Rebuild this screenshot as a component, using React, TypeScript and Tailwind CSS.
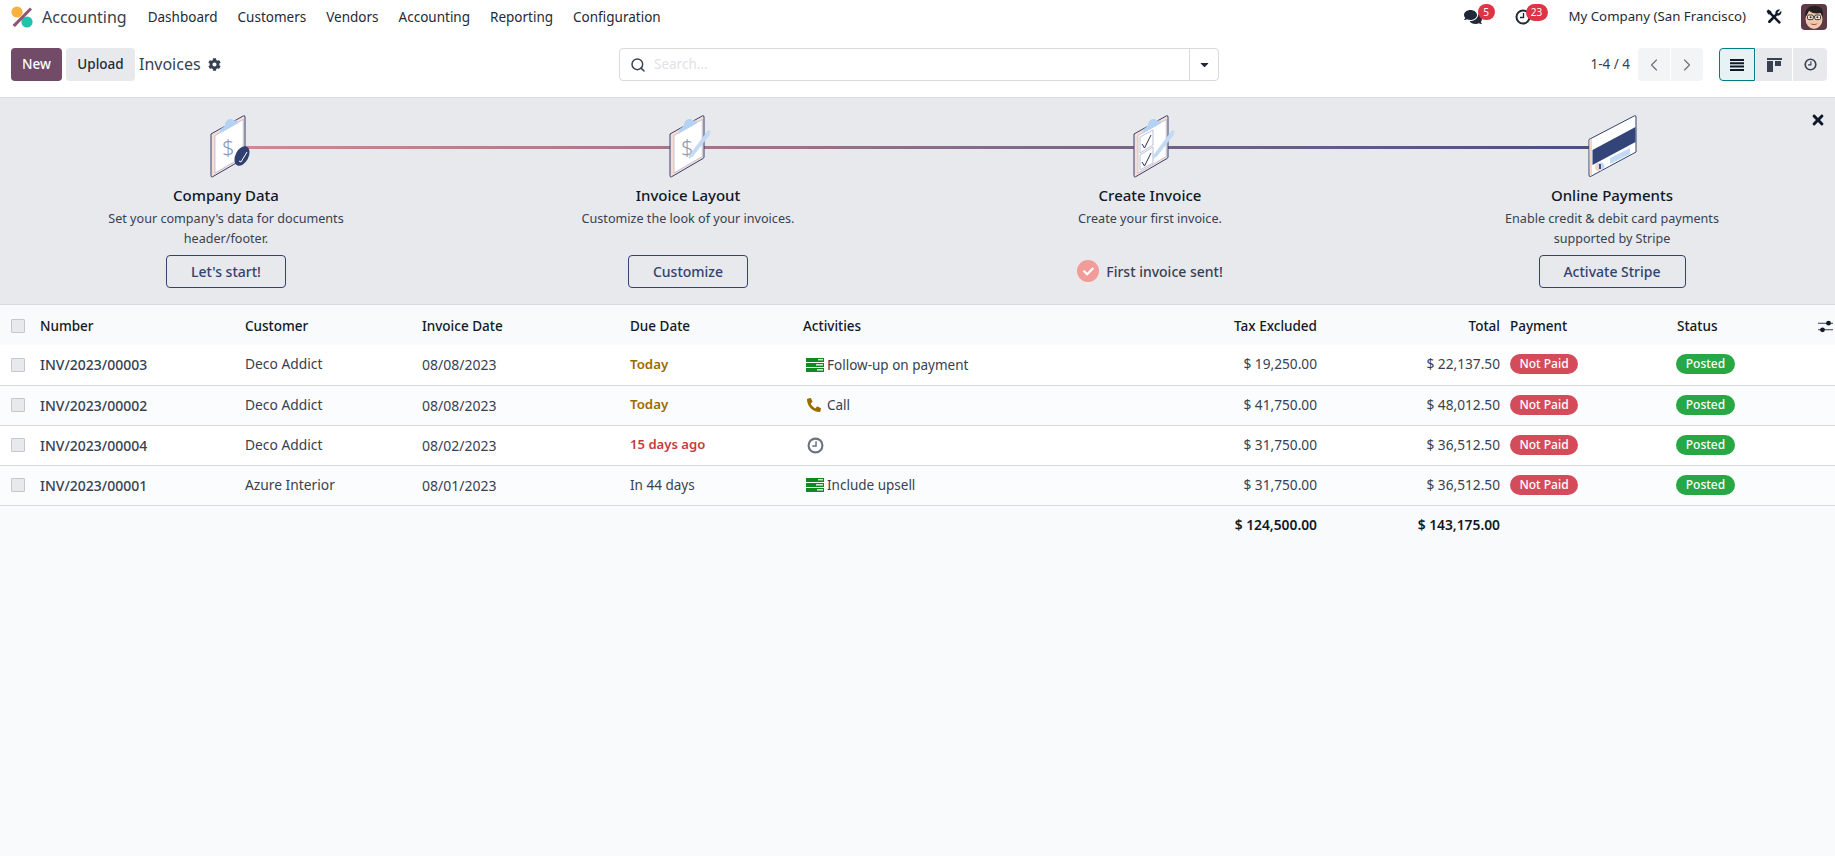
import React from "react";
import { FaComments, FaCog, FaCaretDown, FaTimes, FaPhone, FaCheck } from "react-icons/fa";
import { ChevronLeft, ChevronRight, Search } from "lucide-react";

const Clock = ({ s = 16, c = "#374151" }: { s?: number; c?: string }) => (
  <svg width={s} height={s} viewBox="0 0 16 16" fill="none">
    <circle cx="8" cy="8" r="6.5" stroke={c} strokeWidth="2" />
    <path d="M8.5 4v4.5H5" stroke={c} strokeWidth="1.4" />
  </svg>
);

const Logo = () => (
  <svg width="22" height="22" viewBox="0 0 22 22">
    <circle cx="6" cy="6" r="5.6" fill="#f9b13d" />
    <circle cx="16" cy="16" r="5.6" fill="#1fc4ab" />
    <path d="M19 1.5 L21 3.5 L4 21 L1.5 19 Z" fill="#8f5574" />
  </svg>
);

const Avatar = () => (
  <svg width="26" height="26" viewBox="0 0 26 26" className="rounded-[4px]">
    <rect width="26" height="26" fill="#5e3a48" />
    <ellipse cx="13" cy="15" rx="8.5" ry="10" fill="#f0c8ac" />
    <path d="M4.5 13 C3 4 10 1 15 2 C21 2 23 7 21.5 13 L19.5 9 C15 10 10 9 8 6.5 C7 9 6 11 4.5 13 Z" fill="#23201f" />
    <rect x="6.5" y="11" width="5.8" height="4.6" rx="1.4" fill="#f8e8dc" stroke="#2b2b2b" strokeWidth="0.9" />
    <rect x="13.7" y="11" width="5.8" height="4.6" rx="1.4" fill="#f8e8dc" stroke="#2b2b2b" strokeWidth="0.9" />
    <path d="M12.3 12.5h1.4" stroke="#2b2b2b" strokeWidth="0.9" />
    <circle cx="9.6" cy="13.3" r="1" fill="#2b2b2b" />
    <circle cx="16.4" cy="13.3" r="1" fill="#2b2b2b" />
    <path d="M9 19.5 Q13 22.5 17 19.5 Q13 20.4 9 19.5 Z" fill="#a34a48" />
  </svg>
);

const Tools = () => (
  <svg width="16" height="16" viewBox="0 0 16 16" className="ml-[20px]">
    <path d="M0.6 2.2 L2.2 0.6 L5.2 2.2 L5.6 3.8 L15 13.2 L13.2 15 L3.8 5.6 L2.2 5.2 Z" fill="#111827" />
    <path d="M2.6 11.4 L9.4 4.8 C8.8 2.2 11.4 -0.2 14.2 0.8 L11.4 3.4 L12.6 4.6 L15.2 1.8 C16.2 4.6 13.8 7.2 11.2 6.6 L4.6 13.4 C3 15 1 13 2.6 11.4 Z" fill="#111827" />
  </svg>
);

const Sliders = () => (
  <svg width="15" height="13" viewBox="0 0 15 13" className="ml-[3px]">
    <path d="M0 3.2h15M0 9.8h15" stroke="#374151" strokeWidth="1.1" />
    <circle cx="10.5" cy="3.2" r="2.4" fill="#111827" />
    <circle cx="4.5" cy="9.8" r="2.4" fill="#111827" />
  </svg>
);

const Board = ({ children }: { children?: React.ReactNode }) => (
  <>
    <path d="M1 19 L33.5 0.8 Q35 0.2 35 2 L35 42 Q35 43 34 43.5 L2.5 61.8 Q1 62.4 1 60.5 Z" fill="#f8ddd5" stroke="#34426f" strokeWidth="1" strokeLinejoin="round" />
    <path d="M5 20.5 L33.2 4.5 L33.2 41.6 L5 58 Z" fill="#ffffff" stroke="#a9b2cb" strokeWidth="0.7" />
    <path d="M10 18.5 C9.5 13.5 13.5 12.5 15 10 C15.5 4.5 21 2.5 23.5 5.5 L27.5 5.5 L27.5 8.5 Z" fill="#b5d2f3" />
    {children}
  </>
);

const Dollar = () => (
  <text x="12" y="40" fontSize="22" fill="#8d97b3" fontFamily="Noto Sans, sans-serif" fontWeight="300">$</text>
);

const Pen = () => <path d="M20 41 L38 17 Q41 14 41 17.5 Q41 20 38 23 L24 41 L20 43.5 Z" fill="#c3daf5" stroke="#bcd2ee" strokeWidth="0.5" />;

const IconCompany = () => (
  <svg width="46" height="64" viewBox="0 0 46 64" className="translate-x-[1px]">
    <Board><Dollar /></Board>
    <ellipse cx="32" cy="41" rx="6.5" ry="10.5" transform="rotate(28 32 41)" fill="#2f3f70" />
    <path d="M29 46 L31 47 L37 37" stroke="#fff" strokeWidth="1" fill="none" />
  </svg>
);

const IconLayout = () => (
  <svg width="46" height="64" viewBox="0 0 46 64" className="-translate-x-[2px]">
    <Board><Dollar /></Board>
    <Pen />
  </svg>
);

const IconCreate = () => (
  <svg width="46" height="64" viewBox="0 0 46 64">
    <Board>
      <path d="M7 22 L20 15 L20 30 L7 38 Z M7 40 L20 32 L20 48 L7 55 Z" fill="#fff" stroke="#a9b2cb" strokeWidth="0.8" />
      <path d="M9 29 L11.5 33 L18 20 M9 47 L11.5 51 L18 38" stroke="#27315a" strokeWidth="1" fill="none" />
    </Board>
    <Pen />
  </svg>
);

const IconCard = () => (
  <svg width="50" height="64" viewBox="0 0 50 64" className="-translate-x-[5px]">
    <path d="M1 24.5 L46.5 0.8 Q48 0.2 48 2 L48 37 L2.5 61.5 Q1 62 1 60 Z" fill="#ffffff" stroke="#34426f" strokeWidth="1" strokeLinejoin="round" />
    <path d="M1.5 25 L4 24 L4 59.8 L2 61 Z" fill="#f7d4c8" />
    <path d="M4.5 35 L47.5 12 L47.5 27 L4.5 50 Z" fill="#324478" />
    <path d="M22 43 L42 33 L42 39 L22 49 Z" fill="#c3daf5" />
    <circle cx="11" cy="52" r="4" fill="#f7d4c8" />
    <circle cx="13" cy="51" r="3.5" fill="#c3daf5" />
    <path d="M12 49 V54" stroke="#27315a" strokeWidth="1.6" />
  </svg>
);

const Outline = ({ children, w }: { children: React.ReactNode; w: string }) => (
  <button className={`${w} h-[33px] rounded-[4px] border border-[#34426f] text-[#34426f] text-[14px] font-medium`}>{children}</button>
);

const Step = ({ icon, title, lines, action }: { icon: React.ReactNode; title: string; lines: string[]; action: React.ReactNode }) => (
  <div className="flex flex-col items-center">
    <div className="relative z-10 h-[64px] mt-[17px] flex justify-center translate-x-[6px]">{icon}</div>
    <div className="mt-[4px] text-[15px] font-medium text-[#111827] leading-[24px]">{title}</div>
    <div className="mt-[2px] h-[40px] text-center text-[12.6px] leading-[20px] text-[#374151]">
      {lines.map((l) => <div key={l}>{l}</div>)}
    </div>
    <div className="mt-[6px] h-[33px] flex items-center">{action}</div>
  </div>
);

const Tasks = () => (
  <svg width="18" height="14" viewBox="0 0 18 14" className="shrink-0">
    <rect width="18" height="4" y="0" fill="#0f8a1f" />
    <rect width="18" height="4" y="5" fill="#0f8a1f" />
    <rect width="18" height="4" y="10" fill="#0f8a1f" />
    <rect x="12" y="1" width="5" height="1.4" fill="#cfe8d0" />
    <rect x="10" y="6" width="7" height="1.6" fill="#cfe8d0" />
    <rect x="11" y="11" width="6" height="1.6" fill="#cfe8d0" />
  </svg>
);

const Box = () => <span className="block w-[14px] h-[14px] rounded-[1px] border border-[#c4c7cc] bg-[#e7e9ed] ml-[11px]" />;

type Row = { n: string; c: string; d: string; due: string; dueCls: string; act: React.ReactNode; tax: string; tot: string };
const rows: Row[] = [
  { n: "INV/2023/00003", c: "Deco Addict", d: "08/08/2023", due: "Today", dueCls: "text-[13.3px] font-semibold text-[#9a6b01]", act: <><Tasks /><span className="ml-[3px]">Follow-up on payment</span></>, tax: "$ 19,250.00", tot: "$ 22,137.50" },
  { n: "INV/2023/00002", c: "Deco Addict", d: "08/08/2023", due: "Today", dueCls: "text-[13.3px] font-semibold text-[#9a6b01]", act: <><span className="w-[18px] pl-[1px] shrink-0"><FaPhone size={14} color="#9a6b01" className="-scale-x-100" /></span><span className="ml-[3px]">Call</span></>, tax: "$ 41,750.00", tot: "$ 48,012.50" },
  { n: "INV/2023/00004", c: "Deco Addict", d: "08/02/2023", due: "15 days ago", dueCls: "text-[13.1px] font-semibold text-[#c43c3c]", act: <span className="pl-[1px]"><Clock s={17} c="#6b7280" /></span>, tax: "$ 31,750.00", tot: "$ 36,512.50" },
  { n: "INV/2023/00001", c: "Azure Interior", d: "08/01/2023", due: "In 44 days", dueCls: "text-[13.5px]", act: <><Tasks /><span className="ml-[3px]">Include upsell</span></>, tax: "$ 31,750.00", tot: "$ 36,512.50" },
];

const navItems = ["Dashboard", "Customers", "Vendors", "Accounting", "Reporting", "Configuration"];

export default function App() {
  return (
    <div className="w-[1835px] h-[856px] overflow-hidden bg-[#f9fafb] flex flex-col font-['Noto_Sans',sans-serif] text-[13.5px] text-[#374151]">
      <header className="h-[34px] shrink-0 bg-white flex items-center pl-[11px] pr-[8px]">
        <Logo />
        <span className="ml-[9px] text-[16px] text-[#374151]">Accounting</span>
        <nav className="ml-[21px] flex gap-[20px] text-[#1f2937]">
          {navItems.map((n) => <span key={n}>{n}</span>)}
        </nav>
        <div className="ml-auto flex items-center">
          <span className="relative flex w-[18px] mr-[33px]">
            <FaComments size={18} color="#1f2937" />
            <span className="absolute -top-[4px] left-[14px] w-[17px] h-[16px] rounded-full bg-[#dc3545] text-white text-[10px] leading-[16px] text-center">5</span>
          </span>
          <span className="relative flex w-[16px] mr-[38px]">
            <Clock s={16} c="#1f2937" />
            <span className="absolute -top-[5px] left-[11px] w-[22px] h-[17px] rounded-full bg-[#dc3545] text-white text-[10px] leading-[17px] text-center">23</span>
          </span>
          <span className="text-[13.25px] text-[#1f2937]">My Company (San Francisco)</span>
          <Tools />
          <span className="ml-[19px] flex"><Avatar /></span>
        </div>
      </header>

      <div className="h-[64px] shrink-0 bg-white border-b border-[#d8dadd] grid grid-cols-[619px_600px_1fr] pt-[14px]">
        <div className="pl-[11px] flex items-start">
          <button className="h-[33px] w-[51px] rounded-[4px] bg-[#714b67] text-white font-medium">New</button>
          <button className="ml-[4px] h-[33px] w-[69px] rounded-[4px] bg-[#e7e9ed] text-[#1f2937] font-medium">Upload</button>
          <span className="ml-[4px] h-[33px] leading-[33px] text-[16px] text-[#374151]">Invoices</span>
          <FaCog size={13} color="#374151" className="ml-[7px] mt-[10px]" />
        </div>
        <div>
          <div className="h-[33px] rounded-[4px] border border-[#d8dadd] bg-white flex items-center">
            <Search size={16} color="#374151" strokeWidth={2.2} className="ml-[10px]" />
            <span className="ml-[8px] text-[#e0e2e6]">Search...</span>
            <span className="ml-auto w-[29px] h-full border-l border-[#d8dadd] flex items-center justify-center"><FaCaretDown size={13} color="#1f2937" /></span>
          </div>
        </div>
        <div className="pr-[8px] flex items-start justify-end">
          <span className="h-[33px] leading-[33px] mr-[8px]">1-4 / 4</span>
          <span className="w-[32px] h-[33px] mr-[1px] rounded-l-[4px] bg-[#f3f4f6] flex items-center justify-center"><ChevronLeft size={20} color="#6b7280" strokeWidth={1.4} /></span>
          <span className="w-[32px] h-[33px] rounded-r-[4px] bg-[#f3f4f6] flex items-center justify-center"><ChevronRight size={20} color="#6b7280" strokeWidth={1.4} /></span>
          <span className="ml-[16px] w-[36px] h-[33px] rounded-l-[4px] border border-[#017e84] bg-[#e6f2f3] flex items-center justify-center">
            <svg width="14" height="12" viewBox="0 0 14 12"><path d="M0 0h14v2H0zM0 3.3h14v2H0zM0 6.6h14v2H0zM0 10h14v2H0z" fill="#111827" /></svg>
          </span>
          <span className="ml-[1px] w-[36px] h-[33px] bg-[#e7e9ed] flex items-center justify-center">
            <svg width="15" height="14" viewBox="0 0 15 14"><path d="M0 0h15v2H0zM0 3h6v11H0zM8 3h6v5H8z" fill="#374151" /></svg>
          </span>
          <span className="ml-[1px] w-[34px] h-[33px] rounded-r-[4px] bg-[#e7e9ed] flex items-center justify-center"><Clock s={13} c="#374151" /></span>
        </div>
      </div>

      <section className="relative h-[207px] shrink-0 bg-[#e7e9ed] border-b border-[#d8dadd] overflow-hidden">
        <div className="absolute left-[236px] w-[1360px] top-[48px] h-[2.5px] bg-gradient-to-r from-[#cf8a8e] to-[#4c4f80]" />
        <FaTimes size={16} color="#0f172a" className="absolute left-[1810px] top-[14px]" />
        <div className="relative grid grid-cols-4 w-[1848px] -ml-[5px]">
          <Step icon={<IconCompany />} title="Company Data" lines={["Set your company's data for documents", "header/footer."]} action={<Outline w="w-[120px]">Let's start!</Outline>} />
          <Step icon={<IconLayout />} title="Invoice Layout" lines={["Customize the look of your invoices."]} action={<Outline w="w-[120px]">Customize</Outline>} />
          <Step icon={<IconCreate />} title="Create Invoice" lines={["Create your first invoice."]} action={
            <div className="flex items-center text-[14px] font-medium text-[#374151] -mt-[1px]">
              <span className="w-[22px] h-[22px] rounded-full bg-[#f19c99] flex items-center justify-center"><FaCheck size={11} color="#fff" /></span>
              <span className="ml-[7px]">First invoice sent!</span>
            </div>
          } />
          <Step icon={<IconCard />} title="Online Payments" lines={["Enable credit & debit card payments", "supported by Stripe"]} action={<Outline w="w-[147px]">Activate Stripe</Outline>} />
        </div>
      </section>

      <table className="w-[1835px] table-fixed border-collapse">
        <colgroup>
          <col className="w-[35px]" /><col className="w-[210px]" /><col className="w-[177px]" /><col className="w-[208px]" /><col className="w-[173px]" /><col className="w-[350px]" /><col className="w-[169px]" /><col className="w-[183px]" /><col className="w-[167px]" /><col className="w-[143px]" /><col className="w-[20px]" />
        </colgroup>
        <thead>
          <tr className="h-[40px] text-[#111827] text-left [&>th]:font-medium [&>th]:pt-[2px]">
            <th><Box /></th>
            <th className="pl-[5px]">Number</th>
            <th>Customer</th>
            <th>Invoice Date</th>
            <th>Due Date</th>
            <th>Activities</th>
            <th className="pr-[5px] text-right">Tax Excluded</th>
            <th className="pr-[5px] text-right">Total</th>
            <th className="pl-[5px]">Payment</th>
            <th className="pl-[5px]">Status</th>
            <th><Sliders /></th>
          </tr>
        </thead>
        <tbody>
          {rows.map((r, i) => (
            <tr key={r.n} className={`h-[40px] border-b border-[#d8dadd] ${i % 2 === 0 ? "bg-white" : "bg-[#fbfcfd]"}`}>
              <td><Box /></td>
              <td className="pl-[5px] text-[14px] font-medium">{r.n}</td>
              <td className="text-[13.8px]">{r.c}</td>
              <td className="text-[14px]">{r.d}</td>
              <td className={r.dueCls}>{r.due}</td>
              <td className="pl-[3px]"><div className="flex items-center">{r.act}</div></td>
              <td className="pr-[5px] text-right text-[13.7px]">{r.tax}</td>
              <td className="pr-[5px] text-right text-[13.7px]">{r.tot}</td>
              <td className="pl-[5px]"><span className="inline-block w-[68px] h-[20px] -translate-y-[1px] rounded-full bg-[#d44c59] text-white text-[12px] font-medium leading-[19px] text-center">Not Paid</span></td>
              <td className="pl-[4px]"><span className="inline-block w-[59px] h-[20px] -translate-y-[1px] rounded-full bg-[#28a745] text-white text-[12px] font-medium leading-[19px] text-center">Posted</span></td>
              <td></td>
            </tr>
          ))}
        </tbody>
        <tfoot>
          <tr className="h-[40px] font-semibold text-[#111827]">
            <td colSpan={6}></td>
            <td className="pr-[5px] text-right text-[13.8px]">$ 124,500.00</td>
            <td className="pr-[5px] text-right text-[13.8px]">$ 143,175.00</td>
            <td colSpan={3}></td>
          </tr>
        </tfoot>
      </table>
    </div>
  );
}
